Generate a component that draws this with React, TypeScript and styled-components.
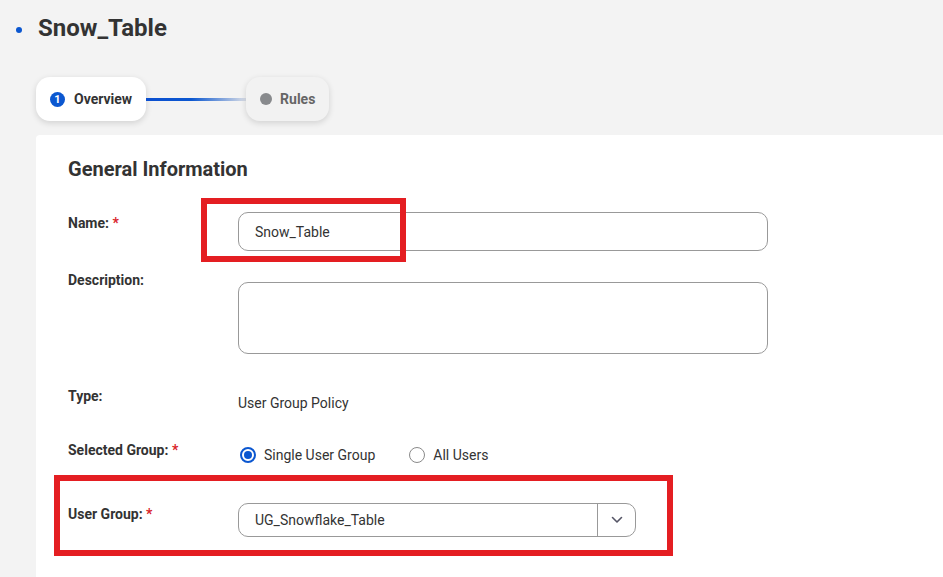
import React from 'react';
import styled, { createGlobalStyle } from 'styled-components';

const GlobalStyle = createGlobalStyle`
  html, body {
    margin: 0;
    padding: 0;
    background: #f3f3f3;
    font-family: Roboto, "Liberation Sans", Arial, sans-serif;
    color: #333333;
    overflow: hidden;
  }
`;

const App = () => {
  return (
    <Page>
      <GlobalStyle />
      <Header>
        <Dot />
        <Title>Snow_Table</Title>
      </Header>

      <Stepper>
        <Step active>
          <StepNumber>1</StepNumber>
          Overview
        </Step>
        <StepLine />
        <Step>
          <StepDot />
          Rules
        </Step>
      </Stepper>

      <Card>
        <SectionTitle>General Information</SectionTitle>

        <Row top={31}>
          <Label offset={3}>
            Name: <Required>*</Required>
          </Label>
          <Field>
            <TextInput>Snow_Table</TextInput>
          </Field>
        </Row>

        <Row top={21}>
          <Label>Description:</Label>
          <Field offset={10}>
            <TextArea />
          </Field>
        </Row>

        <Row top={34}>
          <Label>Type:</Label>
          <Field offset={7}>
            <Value>User Group Policy</Value>
          </Field>
        </Row>

        <Row top={31}>
          <Label>
            Selected Group: <Required>*</Required>
          </Label>
          <Field offset={4}>
            <RadioGroup>
              <RadioOption>
                <Radio checked />
                Single User Group
              </RadioOption>
              <RadioOption>
                <Radio />
                All Users
              </RadioOption>
            </RadioGroup>
          </Field>
        </Row>

        <Row top={39}>
          <Label offset={3}>
            User Group: <Required>*</Required>
          </Label>
          <Field>
            <Select>
              <SelectValue>UG_Snowflake_Table</SelectValue>
              <SelectToggle>
                <svg width="12" height="8" viewBox="0 0 12 8" fill="none">
                  <path d="M1.5 1.5L6 6L10.5 1.5" stroke="#556" strokeWidth="1.6" strokeLinecap="round" strokeLinejoin="round" />
                </svg>
              </SelectToggle>
            </Select>
          </Field>
        </Row>

        <Highlight left={165} top={63} width={205} height={64} />
        <Highlight left={18} top={340} width={619} height={81} />
      </Card>
    </Page>
  );
};

const Page = styled.div`
  width: 943px;
  height: 577px;
  overflow: hidden;
`;

const Header = styled.div`
  display: flex;
  align-items: center;
  height: 56px;
  padding-left: 16px;
`;

const Dot = styled.span`
  width: 6px;
  height: 6px;
  border-radius: 50%;
  background: #0b57d0;
  margin-right: 16px;
  margin-top: 3px;
`;

const Title = styled.h1`
  margin: 0;
  font-size: 24px;
  font-weight: 700;
  color: #333;
`;

const Stepper = styled.div`
  display: flex;
  align-items: center;
  margin: 21px 0 0 36px;
  height: 44px;
`;

const Step = styled.div<{ active?: boolean }>`
  display: flex;
  align-items: center;
  gap: ${(p) => (p.active ? 9 : 8)}px;
  height: 44px;
  padding: 0 14px;
  box-sizing: border-box;
  border-radius: 14px;
  background: ${(p) => (p.active ? '#ffffff' : '#f2f2f2')};
  box-shadow: 0 2px 6px rgba(0, 0, 0, 0.14);
  font-size: 14px;
  font-weight: 700;
  color: ${(p) => (p.active ? '#333' : '#666')};
`;

const StepNumber = styled.span`
  width: 15px;
  height: 15px;
  border-radius: 50%;
  background: #0b57d0;
  color: #fff;
  font-size: 11px;
  font-weight: 700;
  display: flex;
  align-items: center;
  justify-content: center;
`;

const StepDot = styled.span`
  width: 12px;
  height: 12px;
  border-radius: 50%;
  background: #888a8d;
`;

const StepLine = styled.div`
  width: 100px;
  height: 3px;
  background: linear-gradient(90deg, #0b4fd0 0%, #0b57d0 45%, #d9dde6 100%);
`;

const Card = styled.div`
  position: relative;
  margin: 14px 0 0 36px;
  width: 920px;
  height: 460px;
  background: #ffffff;
  border-radius: 4px 0 0 0;
  padding: 22px 0 0 32px;
  box-sizing: border-box;
`;

const SectionTitle = styled.h2`
  margin: 0;
  font-size: 20px;
  line-height: 24px;
  font-weight: 700;
  color: #333;
`;

const Row = styled.div<{ top: number }>`
  display: grid;
  grid-template-columns: 170px 530px;
  align-items: start;
  margin-top: ${(p) => p.top}px;
`;

const Label = styled.div<{ offset?: number }>`
  font-size: 14px;
  font-weight: 700;
  line-height: 16px;
  color: #333;
  padding-top: ${(p) => p.offset ?? 0}px;
`;

const Required = styled.span`
  color: #d9232a;
`;

const Field = styled.div<{ offset?: number }>`
  margin-top: ${(p) => p.offset ?? 0}px;
`;

const TextInput = styled.div`
  height: 39px;
  box-sizing: border-box;
  border: 1px solid #999;
  border-radius: 10px;
  display: flex;
  align-items: center;
  padding-left: 16px;
  font-size: 14px;
  color: #333;
`;

const TextArea = styled.div`
  height: 72px;
  box-sizing: border-box;
  border: 1px solid #999;
  border-radius: 10px;
`;

const Value = styled.div`
  font-size: 14px;
  line-height: 16px;
  color: #333;
`;

const RadioGroup = styled.div`
  display: flex;
  align-items: center;
  gap: 32px;
`;

const RadioOption = styled.label`
  display: flex;
  align-items: center;
  gap: 8px;
  font-size: 14px;
  line-height: 18px;
  color: #333;
`;

const Radio = styled.span<{ checked?: boolean }>`
  width: 16px;
  height: 16px;
  box-sizing: border-box;
  border-radius: 50%;
  border: ${(p) => (p.checked ? '2px solid #0b57d0' : '1px solid #8a8a8a')};
  display: flex;
  align-items: center;
  justify-content: center;
  margin-left: 2px;

  &::after {
    content: '';
    display: ${(p) => (p.checked ? 'block' : 'none')};
    width: 8px;
    height: 8px;
    border-radius: 50%;
    background: #0b57d0;
  }
`;

const Select = styled.div`
  width: 398px;
  height: 34px;
  box-sizing: border-box;
  border: 1px solid #999;
  border-radius: 10px;
  display: flex;
  align-items: stretch;
`;

const SelectValue = styled.div`
  flex: 1;
  display: flex;
  align-items: center;
  padding-left: 16px;
  font-size: 14px;
  color: #333;
`;

const SelectToggle = styled.div`
  width: 37px;
  border-left: 1px solid #999;
  display: flex;
  align-items: center;
  justify-content: center;
`;

const Highlight = styled.div<{ left: number; top: number; width: number; height: number }>`
  position: absolute;
  left: ${(p) => p.left}px;
  top: ${(p) => p.top}px;
  width: ${(p) => p.width}px;
  height: ${(p) => p.height}px;
  box-sizing: border-box;
  border: 6px solid #e41e22;
  pointer-events: none;
`;

export default App;
